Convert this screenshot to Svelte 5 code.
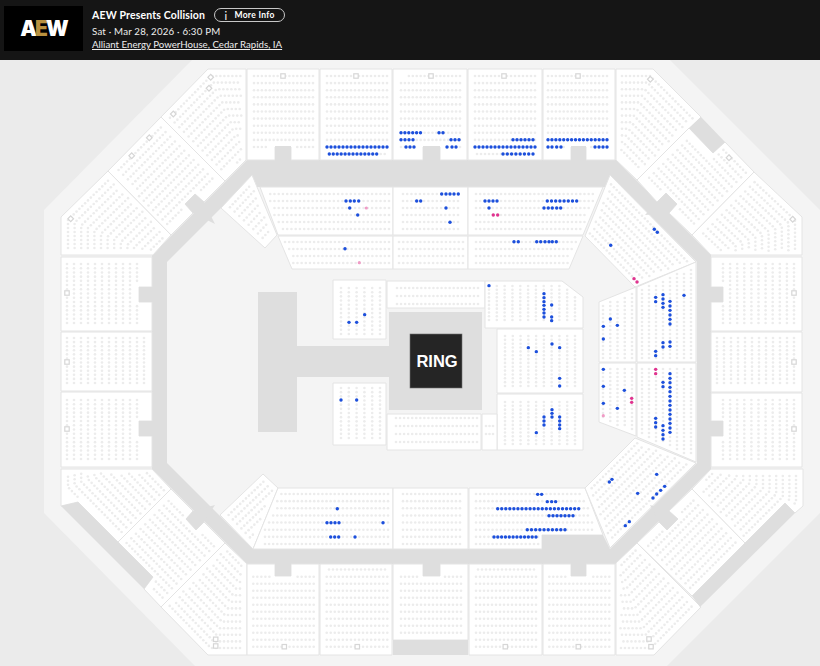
<script>
	// polygons are in page pixels, the svg viewBox starts at y=60
	const poly = (s) => s.split(' ').map((p) => p.split(',').map(Number));
	const range = (a, b, n) => Array.from({ length: n }, (_, i) => a + ((b - a) * i) / (n - 1));

	function distToEdge(p, a, b) {
		const dx = b[0] - a[0], dy = b[1] - a[1];
		const t = Math.max(0, Math.min(1, ((p[0] - a[0]) * dx + (p[1] - a[1]) * dy) / (dx * dx + dy * dy)));
		return Math.hypot(p[0] - a[0] - t * dx, p[1] - a[1] - t * dy);
	}
	function inside(p, pts, inset) {
		let hit = false;
		for (let i = 0, j = pts.length - 1; i < pts.length; j = i++) {
			const a = pts[i], b = pts[j];
			if (distToEdge(p, a, b) < inset) return false;
			if (a[1] > p[1] !== b[1] > p[1] && p[0] < ((b[0] - a[0]) * (p[1] - a[1])) / (b[1] - a[1]) + a[0]) hit = !hit;
		}
		return hit;
	}

	// seats in straight rows and columns
	const grid = (xs, ys) => xs.flatMap((x) => ys.map((y) => [x, y]));

	// seats following an edge path (clockwise on screen), offset inward row by row
	function offsetPath(path, d) {
		const dirs = path.slice(1).map((p, i) => {
			const dx = p[0] - path[i][0], dy = p[1] - path[i][1], l = Math.hypot(dx, dy);
			return [dx / l, dy / l];
		});
		return path.map((p, i) => {
			const a = dirs[Math.max(0, i - 1)], b = dirs[Math.min(dirs.length - 1, i)];
			const nx = -a[1] - b[1], ny = a[0] + b[0];
			const l = Math.hypot(nx, ny);
			const m = d / ((nx / l) * -a[1] + (ny / l) * a[0]);
			return [p[0] + (nx / l) * m, p[1] + (ny / l) * m];
		});
	}
	function rows(path, first = 7, gap = 6.6, step = 4, count = 24) {
		const out = [];
		for (let k = 0; k < count; k++) {
			const line = offsetPath(path, first + k * gap);
			let left = 0;
			for (let i = 1; i < line.length; i++) {
				const a = line[i - 1], b = line[i];
				const len = Math.hypot(b[0] - a[0], b[1] - a[1]);
				let t = left;
				while (t < len) {
					out.push([a[0] + ((b[0] - a[0]) * t) / len, a[1] + ((b[1] - a[1]) * t) / len]);
					t += step;
				}
				left = t - len;
			}
		}
		return out;
	}

	const topY = range(76, 147, 11);
	const botY = range(576.7, 646.7, 11);
	const sideX = range(67, 137, 11);
	const sideXr = range(723, 794, 11);
	const floorRowsA = range(194, 229, 6);
	const floorRowsB = range(242, 263, 4);
	const bottomRows = range(494, 544, 8);
	const wedgeH = range(642, 691, 8);
	const wedgeG = range(603, 632, 5);
	const wedgeY = range(262, 466, 52);
	const p4x = range(505, 575, 10);

	const sections = [
		// upper bowl, top row
		{ pts: '247,69 319,69 319,160 291,160 291,147 275,147 275,160 247,160', seats: grid(range(254, 313, 16), topY), inset: 6 },
		{ pts: '320,69 392,69 392,160 320,160', seats: [...grid(range(327, 387, 16), topY), ...grid(range(329.3, 384.7, 15), [154])], inset: 3 },
		{ pts: '393,69 467,69 467,160 440,160 440,147 423,147 423,160 393,160', seats: grid(range(401, 460, 16), topY).filter((p) => p[1] > 76 || p[0] > 406), inset: 6.5 },
		{ pts: '468,69 542,69 542,160 468,160', seats: [...grid(range(475, 535, 16), topY), ...grid(range(477, 533, 15), [154])], inset: 3 },
		{ pts: '543,69 615,69 615,160 586,160 586,147 571,147 571,160 543,160', seats: grid(range(548, 607, 16), topY), inset: 5 },
		// upper bowl, corners and diagonals
		{ pts: '208,69 246,69 246,160 225,181 161,117', seats: rows(poly('100,178 161,117 208,69 300,69')), inset: 4.5 },
		{ pts: '161,117 225,181 204,202 195,194 185,204 193,213 171,235 108,171', seats: rows(poly('60,219 220,58')), inset: 4.5 },
		{ pts: '108,171 171,235 153,255 61,255 61,217', seats: rows(poly('61,300 61,217 108,171 170,110')), inset: 4 },
		{ pts: '616,69 653,69 701,117 637,180 616,160', seats: rows(poly('550,69 653,69 701,117 770,186')), inset: 4.5 },
		{ pts: '689,128 713,153 725,142 754,172 692,235 669,213 677,204 666,193 657,202 637,180', seats: rows(poly('650,65 800,218')), inset: 4.5 },
		{ pts: '754,172 802,217 802,255 711,255 692,235', seats: rows(poly('700,118 754,172 802,217 802,300')), inset: 4 },
		// left and right columns
		{ pts: '61,257 152,257 152,287 139,287 139,302 152,302 152,331 61,331', seats: grid(sideX, range(264, 323, 15)), inset: 4 },
		{ pts: '61,332 152,332 152,391 61,391', seats: grid(range(67, 144, 12), range(338, 383, 12)), inset: 3 },
		{ pts: '61,392 152,392 152,421 139,421 139,436 152,436 152,467 61,467', seats: grid(sideX, range(400, 459, 15)), inset: 4 },
		{ pts: '711,257 802,257 802,331 711,331 711,302 723,302 723,287 711,287', seats: grid(sideXr, range(264, 323, 15)), inset: 4 },
		{ pts: '711,332 802,332 802,392 711,392', seats: grid(range(717, 794, 12), range(338, 383, 12)), inset: 3 },
		{ pts: '711,393 802,393 802,467 711,467 711,436 723,436 723,421 711,421', seats: grid(sideXr, range(400, 459, 15)), inset: 4 },
		// lower corners
		{ pts: '61,469 152,469 171,489 118,542 78,502 61,506', seats: rows(poly('140,570 61,490 61,400')), inset: 4 },
		{ pts: '171,489 193,511 186,519 196,530 204,522 225,543 161,607 144,589 153,577 118,542', seats: rows(poly('200,645 60,505')), inset: 4.5 },
		{ pts: '225,543 247,564 247,655 208,655 161,607', seats: rows(poly('300,655 208,655 161,607 100,545')), inset: 4.5 },
		{ pts: '711,469 803,469 803,506 795,513 785,503 745,543 692,489', seats: rows(poly('803,400 803,505 720,588')), inset: 4 },
		{ pts: '692,489 745,543 692,596 637,543 659,522 667,530 678,519 669,511', seats: rows(poly('780,508 640,648')), inset: 4.5 },
		{ pts: '616,563 637,543 701,607 654,655 616,655', seats: rows(poly('770,538 701,607 654,655 560,655')), inset: 4.5 },
		// bottom row
		{ pts: '247,564 275,564 275,576 291,576 291,564 319,564 319,655 247,655', seats: grid(range(253.3, 313.7, 16), botY), inset: 5 },
		{ pts: '320,564 392,564 392,655 320,655', seats: [...grid(range(326.7, 387.3, 16), botY), ...grid(range(329, 385, 15), [569.5])], inset: 3 },
		{ pts: '393,564 423,564 423,576 440,576 440,564 468,564 468,640 393,640', seats: grid(range(401, 461, 16), range(576.7, 632.7, 9)), inset: 5 },
		{ pts: '469,564 542,564 542,655 469,655', seats: [...grid(range(476, 536, 16), botY), ...grid(range(478, 534, 15), [569.5])], inset: 3 },
		{ pts: '543,564 571,564 571,576 586,576 586,564 615,564 615,655 543,655', seats: grid(range(549.3, 609.3, 16), botY), inset: 5 },
		// floor, above the ring
		{ pts: '252,175 277,235 265,248 221,208', seats: rows(poly('190,241 283,142'), 6, 6.4), inset: 4 },
		{ pts: '260,187 393,187 393,235 278,235', seats: grid(range(266, 389, 30), floorRowsA), inset: 3.5 },
		{ pts: '393,187 468,187 468,235 393,235', seats: grid(range(403, 458, 14), floorRowsA), inset: 3 },
		{ pts: '468,187 603,187 583,235 468,235', seats: grid(range(476, 597, 30), floorRowsA), inset: 3.5 },
		{ pts: '278,236 393,236 393,269 292,269', seats: grid(range(285, 389, 26), floorRowsB), inset: 3.5 },
		{ pts: '393,236 468,236 468,269 393,269', seats: grid(range(399, 463, 16), floorRowsB), inset: 3 },
		{ pts: '468,236 583,236 569,269 468,269', seats: grid(range(476, 580, 26), floorRowsB), inset: 3.5 },
		{ pts: '610,175 696,262 635,287 585,236', seats: rows(poly('570,135 740,307'), 5.5, 6.2), inset: 3.5 },
		// floor, wedge on the right
		{ pts: '599,302 636,287 636,362 599,362', seats: grid(wedgeG, wedgeY), inset: 3.5 },
		{ pts: '637,287 696,262 696,362 637,362', seats: grid(wedgeH, wedgeY), inset: 3.5 },
		{ pts: '599,363 636,363 636,436 599,422', seats: grid(wedgeG, wedgeY.map((y) => y + 107)), inset: 3.5 },
		{ pts: '637,363 696,363 696,462 637,437', seats: grid(wedgeH, wedgeY.map((y) => y + 107)), inset: 3.5 },
		// floor, around the ring
		{ pts: '333,280 386,280 386,339 333,339', seats: grid(range(341, 380, 6), range(288, 334, 12)), inset: 3 },
		{ pts: '387,281 485,281 485,308 387,308', seats: grid(range(397, 478, 21), [288, 296, 304]), inset: 3 },
		{ pts: '485,281 562,281 583,297 583,328 485,328', seats: grid(range(489, 575, 12), range(286, 320, 10)), inset: 3 },
		{ pts: '497,329 583,329 583,393 497,393', seats: grid(p4x, range(336, 386, 14)), inset: 3 },
		{ pts: '497,394 583,394 583,450 497,450', seats: grid(p4x, range(402, 444, 12)), inset: 3 },
		{ pts: '333,383 386,383 386,445 333,445', seats: grid(range(341, 380, 6), range(388, 438, 13)), inset: 3 },
		{ pts: '387,414 481,414 481,450 387,450', seats: grid(range(396, 477, 21), [418, 426, 434, 442]), inset: 3 },
		{ pts: '482,414 497,414 497,450 482,450', seats: grid(range(486, 493, 3), [426, 434]), inset: 2 },
		// floor, below the ring
		{ pts: '263,474 278,488 253,549 220,515', seats: rows(poly('190,544 290,449'), 5.5, 6.2), inset: 4 },
		{ pts: '278,488 393,488 393,549 253,549', seats: grid(range(265, 388, 31), bottomRows), inset: 3.5 },
		{ pts: '393,488 468,488 468,549 393,549', seats: grid(range(403, 460, 15), bottomRows), inset: 3 },
		{ pts: '469,488 585,488 603,535 542,535 542,549 469,549', seats: grid(range(476, 592, 29), bottomRows), inset: 3.5 },
		{ pts: '585,488 635,438 696,463 610,548', seats: rows(poly('730,429 570,587'), 5.5, 6.2), inset: 3.5 }
	].map((s) => {
		const pts = poly(s.pts);
		return { pts: s.pts, seats: s.seats.filter((p) => inside(p, pts, s.inset)) };
	});

	// corridor stubs cut into the upper bowl and the blocks against the outer wall
	const stubs = [
		'275,146 291,146 291,161 275,161', '423,146 440,146 440,161 423,161', '571,146 586,146 586,161 571,161',
		'275,563 291,563 291,576 275,576', '423,563 440,563 440,576 423,576', '571,563 586,563 586,576 571,576',
		'139,287 153,287 153,302 139,302', '139,421 153,421 153,436 139,436',
		'710,287 723,287 723,302 710,302', '710,421 723,421 723,436 710,436',
		'204,202 195,194 185,204 193,213 215,224', '669,213 677,204 666,193 657,202 645,215',
		'193,511 186,519 196,530 204,522 215,505', '659,522 667,530 678,519 669,511 650,505',
		'61,506 78,502 153,577 144,589', '701,117 689,128 713,153 725,142',
		'785,503 795,513 700,607 692,596', '393,640 468,640 468,655 393,655', '542,535 603,535 610,549 542,549'
	];

	const zoomed = (ox, oy, list) => list.map(([x, y]) => [ox + x / 3, oy + y / 3]);
	const row = (y, xs) => xs.map((x) => [x, y]);

	const blue = [
		// top row
		...row(147, range(327, 387, 16)),
		...row(154, range(329.3, 376.7, 13)),
		...row(132.7, range(401, 420.5, 6)), ...row(132.7, [439, 443]),
		...row(139.7, [401, 405, 409, 413, 451, 455, 459]),
		...row(147, [406, 410, 414, 447, 452, 456]),
		...row(139.7, range(513, 533, 6)),
		...row(147, range(475, 535, 16)),
		...row(154, range(503, 533, 8)),
		...row(139.7, range(548, 607, 16)),
		...row(147, [548, 552, 556.7, 561, 595, 599, 603, 607]),
		// floor above the ring
		...row(201, [346, 350.3, 354.3, 358.7]),
		[349.7, 208], [357.7, 215], [345, 248.7],
		...row(194, [441.7, 446, 450, 454, 458.3]),
		[416.7, 201], [420.7, 201], [446, 208], [450, 222.3],
		...row(201, [485, 489, 493, 497]), [489, 208],
		...row(201, range(547.3, 576.7, 8)),
		...row(208, [544, 548.3, 552.3, 556.7, 560.7]),
		...row(241.7, [514, 518.3, 536.7, 540.7, 545, 549, 552.3, 556.3]),
		[654.3, 229.3], [657.3, 232.3], [610.7, 245.3],
		// wedge
		...zoomed(580, 170, [
			[227, 382], [249, 374], [227, 395], [249, 387], [249, 400], [249, 412], [270, 394], [270, 408],
			[270, 421], [270, 435], [270, 448], [270, 462], [312, 376], [249, 518], [270, 516], [249, 531],
			[270, 529], [227, 544], [227, 557], [91, 447], [70, 469], [112, 466], [70, 507], [70, 598],
			[70, 649], [133, 661], [70, 700], [112, 715], [270, 611], [270, 625], [270, 638], [249, 637],
			[249, 650], [270, 652], [270, 665], [270, 679], [270, 693], [270, 706], [270, 720], [270, 733],
			[270, 747], [270, 760], [270, 774], [270, 787], [227, 745], [227, 758], [227, 771], [249, 767],
			[249, 781], [249, 794], [249, 807]
		]),
		// around the ring
		...zoomed(320, 270, [
			[87, 157], [110, 157], [134, 134], [63, 390], [110, 390], [507, 47], [672, 71], [672, 83],
			[672, 95], [672, 106], [672, 118], [672, 129], [672, 141], [695, 105], [695, 141], [695, 152],
			[625, 233], [649, 245], [696, 222], [719, 233], [719, 325], [719, 348], [696, 419], [696, 430],
			[696, 441], [672, 441], [672, 453], [672, 465], [719, 441], [719, 453], [719, 465], [719, 476], [649, 488]
		]),
		// below the ring
		...zoomed(460, 450, [
			[456, 88], [448, 96], [590, 73], [533, 130], [614, 109], [602, 121], [590, 132], [579, 144],
			[508, 215], [496, 227], [233, 133], [245, 133], [262, 155], [275, 155], [287, 155]
		]),
		...row(508.7, range(497.7, 578.7, 21)),
		...row(515.7, range(549, 573, 7)),
		...row(529.7, range(527.3, 565, 10)),
		...row(537, range(494, 536, 12)),
		...row(508.7, [337.3]),
		...row(522.7, [327, 331, 335, 339, 383]),
		...row(537, [330.7, 334.7, 338.7, 355])
	];

	const pink = [
		[493.3, 215], [497.7, 215],
		...zoomed(580, 170, [[162, 326], [171, 336], [155, 685], [155, 697], [227, 598], [227, 611]])
	];
	const paleP = [[366.3, 208], [359.3, 262.7], [603.3, 415.7]];

	const boxes = [
		[283, 76], [356, 76], [431, 76], [504, 76], [578, 76], [67, 293], [67, 362], [67, 429],
		[794, 293], [794, 362], [794, 429], [284.3, 646.7], [357.3, 646.7], [505.3, 646.7], [578.3, 646.7],
		[215.7, 639.3], [215.7, 646], [649, 639], [651, 646.7]
	];
	const diamonds = [
		[210.7, 77.3], [209, 88.3], [173.3, 114], [149.3, 137.7], [131.7, 155.7], [70.7, 218.7],
		[650.3, 79.3], [729, 157.7], [792.7, 219.3]
	];
</script>

<div class="page">
	<header class="bar">
		<div class="logo"><span class="aew">A<span class="gold">E</span>W</span></div>
		<div class="info">
			<div class="title-row">
				<span class="title">AEW Presents Collision</span>
				<button class="more"><span class="glyph">i</span>More Info</button>
			</div>
			<div class="when">Sat · Mar 28, 2026 · 6:30 PM</div>
			<a class="venue" href="#venue">Alliant Energy PowerHouse, Cedar Rapids, IA</a>
		</div>
	</header>

	<svg class="map" viewBox="0 60 820 606" width="820" height="606">
		<rect x="0" y="60" width="820" height="606" fill="#ebebeb" />
		<polygon points="192,60 670,60 820,210 820,513 667,666 195,666 44,513 44,210" fill="#f4f4f4" />

		<!-- concourse ring -->
		<polygon points="247,160 616,160 711,255 711,469 616,564 247,564 152,469 152,255" fill="#dedede" />
		<polygon points="242,187 621,187 697,262 697,463 610,549 253,549 167,463 167,262" fill="#f4f4f4" />

		<!-- stage and ring -->
		<path class="wedge" d="M258 292h39v54h92v-34h93v98h-93v-33h-92v55h-39z" />
		<rect x="410" y="334" width="52" height="54" fill="#252525" stroke="#6e6e6e" stroke-width="0.6" />
		<text class="ring" x="437" y="367">RING</text>

		{#each sections as s}
			<polygon class="section" points={s.pts} />
			{#each s.seats as [x, y]}
				<circle cx={x} cy={y} r="1.3" fill="#ececec" />
			{/each}
		{/each}

		{#each stubs as pts}
			<polygon class="wedge" points={pts} />
		{/each}

		{#each boxes as [x, y]}
			<rect class="marker" x={x - 2.2} y={y - 2.2} width="4.4" height="4.4" />
		{/each}
		{#each diamonds as [x, y]}
			<rect class="marker" x={x - 2} y={y - 2} width="4" height="4" transform="rotate(45 {x} {y})" />
		{/each}

		{#each blue as [x, y]}
			<circle cx={x} cy={y} r="1.7" fill="#1c4fdc" />
		{/each}
		{#each pink as [x, y]}
			<circle cx={x} cy={y} r="1.7" fill="#e0348f" />
		{/each}
		{#each paleP as [x, y]}
			<circle cx={x} cy={y} r="1.6" fill="#f09cc6" />
		{/each}
	</svg>
</div>

<style>
	:global(body) {
		background: #ebebeb;
	}

	.page {
		width: 820px;
		height: 666px;
		overflow: hidden;
		display: flex;
		flex-direction: column;
	}

	.bar {
		height: 60px;
		flex: none;
		box-sizing: border-box;
		background: #151515;
		display: flex;
		align-items: flex-start;
		padding: 6px 0 0 4px;
		gap: 9px;
		color: #fff;
		font-family: Lato, 'Liberation Sans', sans-serif;
	}

	.logo {
		width: 79px;
		height: 45px;
		background: #000;
		display: flex;
		align-items: center;
		justify-content: center;
	}

	.aew {
		font-family: Inter, 'Liberation Sans', sans-serif;
		font-weight: 900;
		font-size: 21px;
		line-height: 1;
		letter-spacing: -2px;
		color: #fff;
	}

	.gold {
		color: #b8903f;
	}

	.info {
		display: flex;
		flex-direction: column;
		padding-top: 2px;
	}

	.title-row {
		display: flex;
		align-items: center;
		gap: 9px;
		height: 14px;
		margin-bottom: 3px;
	}

	.title {
		font-size: 10.5px;
		font-weight: 700;
		letter-spacing: 0.15px;
	}

	.more {
		width: 71px;
		height: 14px;
		box-sizing: border-box;
		padding: 0;
		background: none;
		border: 1px solid #c8c8c8;
		border-radius: 7px;
		color: #fff;
		font: 700 8.5px Lato, 'Liberation Sans', sans-serif;
		letter-spacing: 0.3px;
		display: flex;
		align-items: center;
		justify-content: center;
		gap: 7px;
	}

	.glyph {
		font-weight: 400;
		font-size: 11px;
	}

	.when {
		font-size: 9.7px;
		letter-spacing: 0.2px;
		color: #eee;
		line-height: 13px;
	}

	.venue {
		font-size: 9.7px;
		color: #eee;
		line-height: 13px;
	}

	.map {
		display: block;
		flex: none;
	}

	.section {
		fill: #fff;
		stroke: #e4e4e4;
		stroke-width: 1;
	}

	.wedge {
		fill: #dedede;
	}

	.marker {
		fill: #fff;
		stroke: #d6d6d6;
		stroke-width: 1.2;
	}

	.ring {
		fill: #fff;
		font: 700 16.5px 'Liberation Sans', sans-serif;
		text-anchor: middle;
	}
</style>
